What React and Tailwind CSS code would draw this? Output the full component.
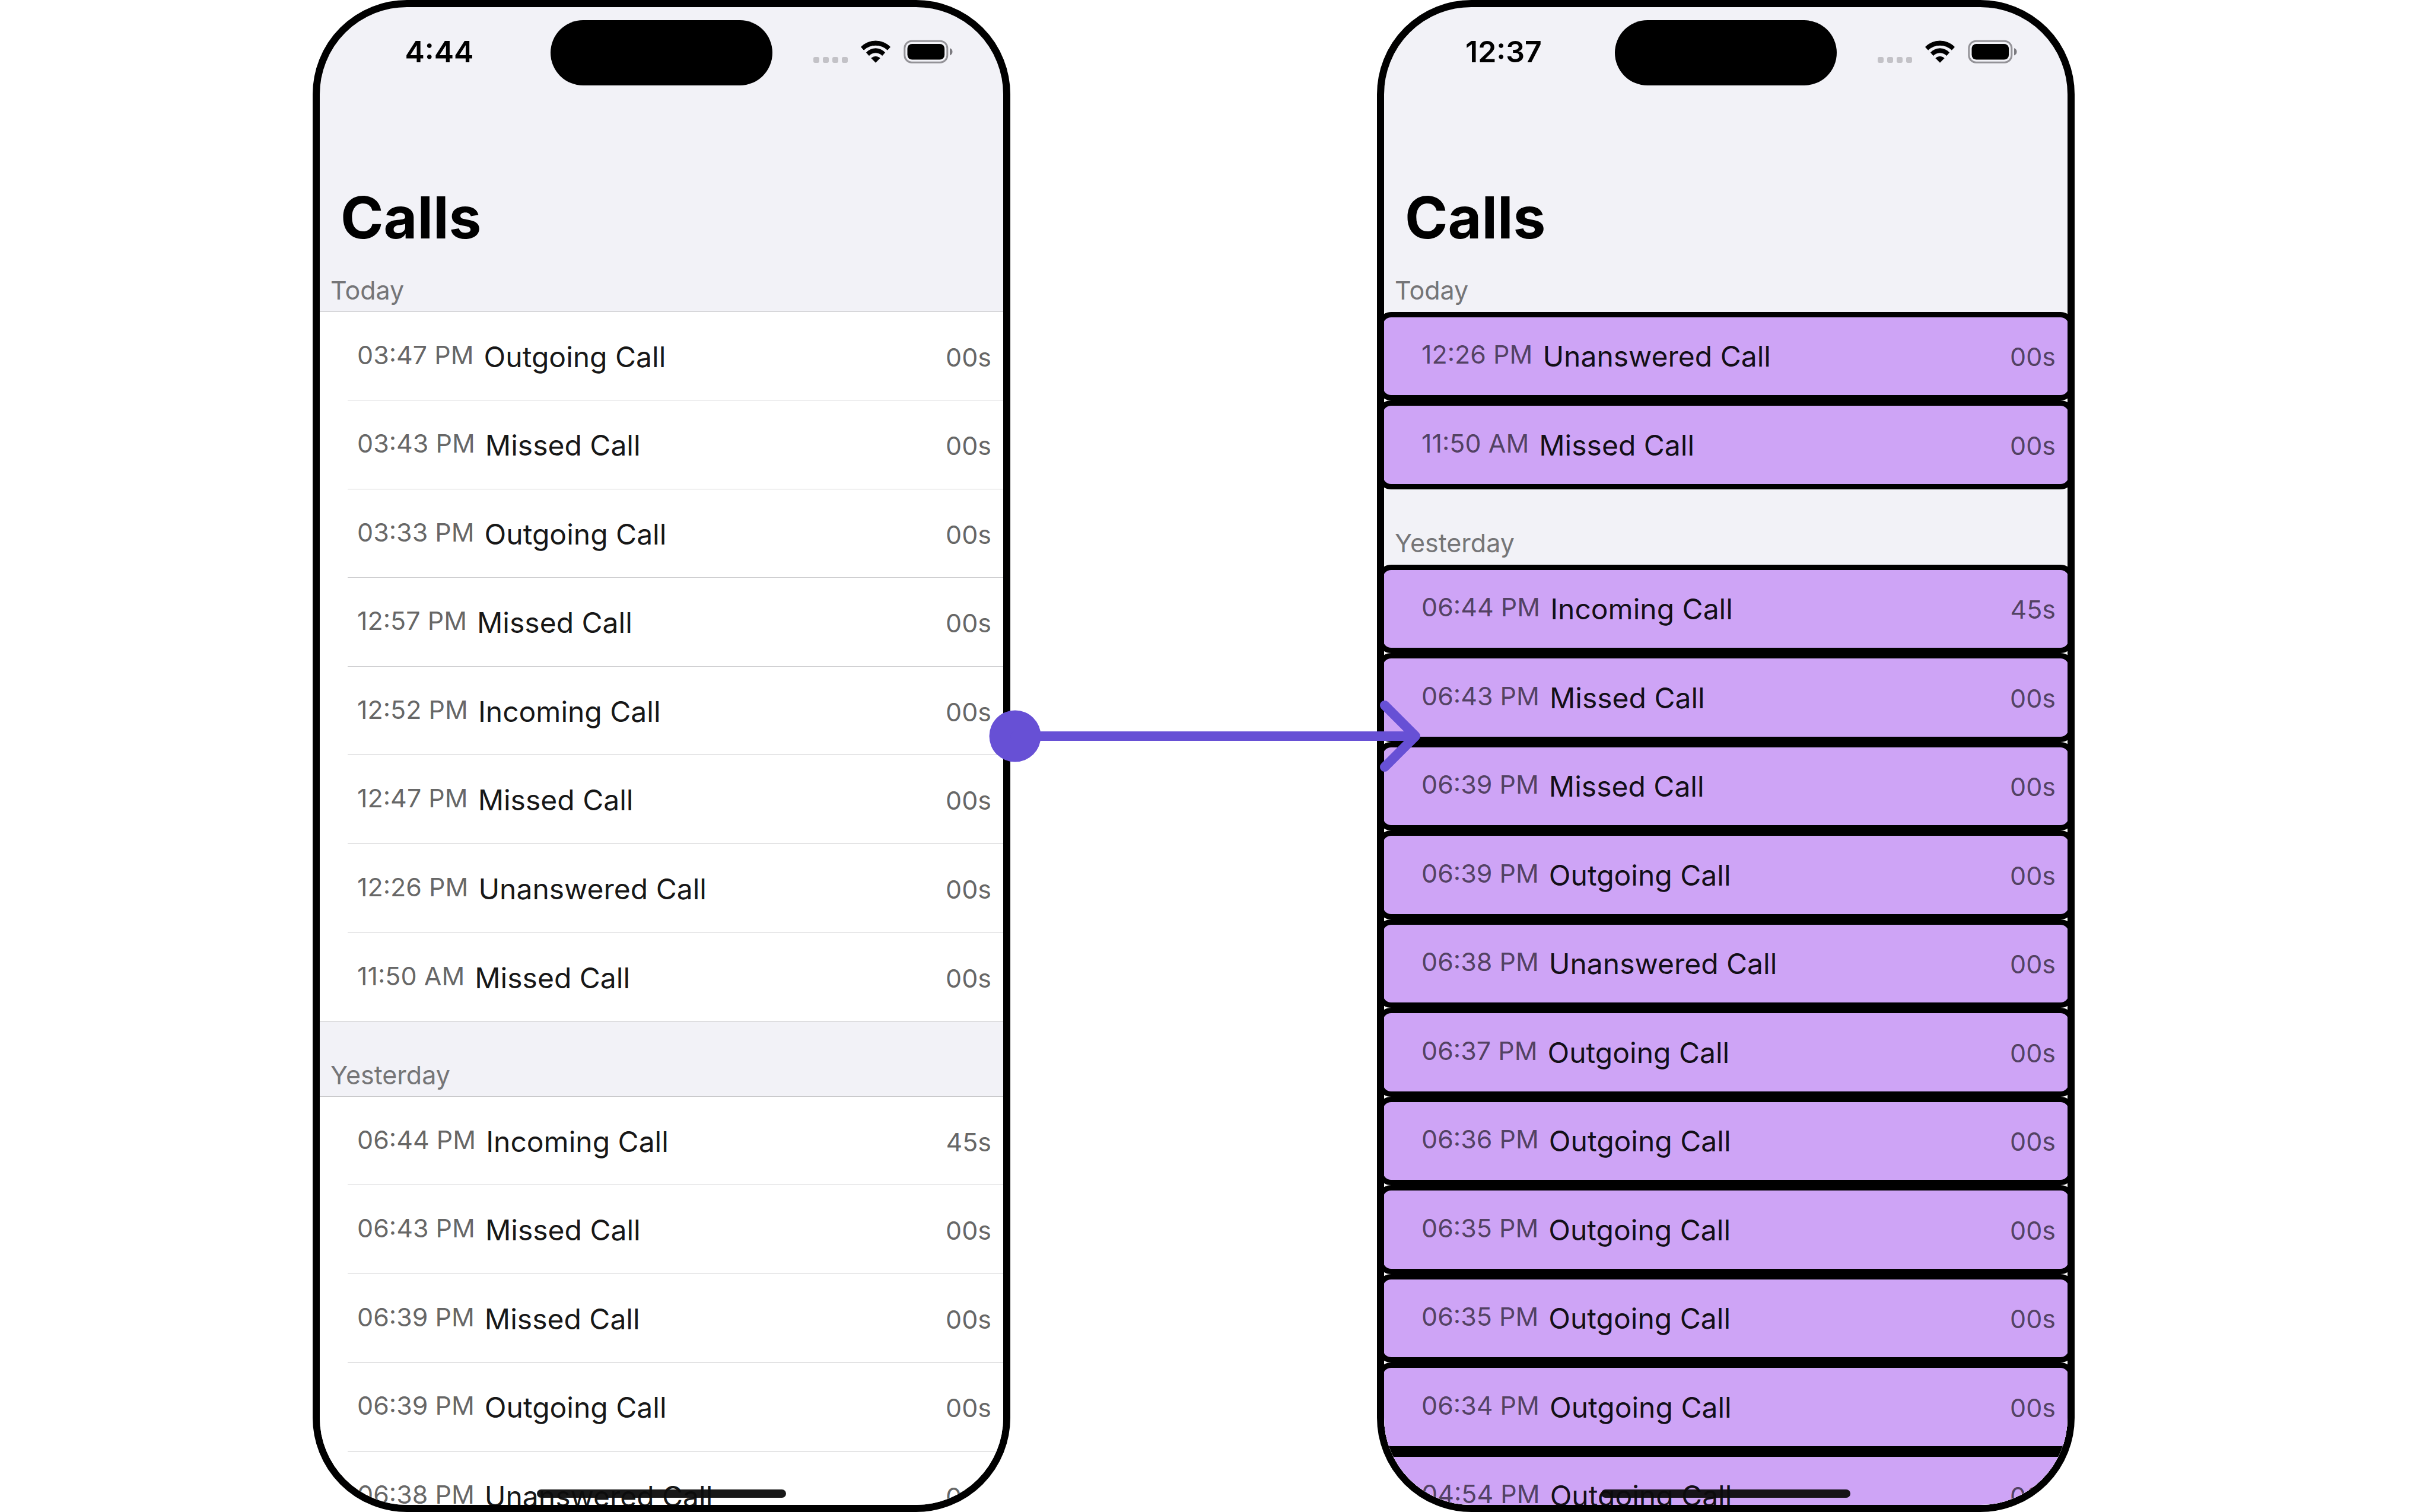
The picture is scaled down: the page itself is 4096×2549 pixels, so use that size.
const leftSections = [
  {
    label: "Today",
    calls: [
      ["03:47 PM", "Outgoing Call", "00s"],
      ["03:43 PM", "Missed Call", "00s"],
      ["03:33 PM", "Outgoing Call", "00s"],
      ["12:57 PM", "Missed Call", "00s"],
      ["12:52 PM", "Incoming Call", "00s"],
      ["12:47 PM", "Missed Call", "00s"],
      ["12:26 PM", "Unanswered Call", "00s"],
      ["11:50 AM", "Missed Call", "00s"],
    ],
  },
  {
    label: "Yesterday",
    calls: [
      ["06:44 PM", "Incoming Call", "45s"],
      ["06:43 PM", "Missed Call", "00s"],
      ["06:39 PM", "Missed Call", "00s"],
      ["06:39 PM", "Outgoing Call", "00s"],
      ["06:38 PM", "Unanswered Call", "00s"],
    ],
  },
];

const rightSections = [
  {
    label: "Today",
    calls: [
      ["12:26 PM", "Unanswered Call", "00s"],
      ["11:50 AM", "Missed Call", "00s"],
    ],
  },
  {
    label: "Yesterday",
    calls: [
      ["06:44 PM", "Incoming Call", "45s"],
      ["06:43 PM", "Missed Call", "00s"],
      ["06:39 PM", "Missed Call", "00s"],
      ["06:39 PM", "Outgoing Call", "00s"],
      ["06:38 PM", "Unanswered Call", "00s"],
      ["06:37 PM", "Outgoing Call", "00s"],
      ["06:36 PM", "Outgoing Call", "00s"],
      ["06:35 PM", "Outgoing Call", "00s"],
      ["06:35 PM", "Outgoing Call", "00s"],
      ["06:34 PM", "Outgoing Call", "00s"],
      ["04:54 PM", "Outgoing Call", "00s"],
    ],
  },
];

function StatusIcons() {
  return (
    <svg width="236" height="40" viewBox="1370 67 236 40" aria-hidden="true">
      <g fill="#c3c2c7">
        <rect x="1371" y="96" width="10" height="10" rx="3" />
        <rect x="1387" y="96" width="10" height="10" rx="3" />
        <rect x="1403" y="96" width="10" height="10" rx="3" />
        <rect x="1419" y="96" width="10" height="10" rx="3" />
      </g>
      <g fill="#000" stroke="#000" strokeWidth="1" strokeLinejoin="round">
        <path d="M1451.5 79A35.2 35.2 0 0 1 1500.5 79L1496 84.2A29 29 0 0 0 1456 84.2Z" />
        <path d="M1460.5 88.6A21.2 21.2 0 0 1 1491.5 88.6L1487.2 93.6A15.5 15.5 0 0 0 1464.8 93.6Z" />
        <path d="M1468.8 98A11.4 11.4 0 0 1 1483.2 98L1476 105.3Z" />
      </g>
      <rect x="1524.8" y="69.2" width="72" height="36" rx="12" fill="none" stroke="#949398" strokeWidth="3" />
      <rect x="1529.5" y="74" width="62.6" height="26.6" rx="8" fill="#000" />
      <path d="M1601 81Q1605.5 83 1605.5 87.2T1601 93.5Z" fill="#7c7b80" />
    </svg>
  );
}

function CallText({ call }) {
  const [time, title, duration] = call;
  return (
    <>
      <div className="flex items-start gap-[17px] whitespace-nowrap">
        <time className="text-[43px] leading-[54px] text-black/62">{time}</time>
        <span className="text-[48px] leading-[62px] text-black/92">{title}</span>
      </div>
      <span className="text-[43px] leading-[54px] text-black/62">{duration}</span>
    </>
  );
}

function PlainRow({ call }) {
  return (
    <li className="group flex min-h-[149px] pl-[47px] even:min-h-[150px]">
      <div className="flex flex-1 items-center justify-between border-b border-[#cbcbcd] pt-[3px] pr-5 pl-4 group-last:border-b-0">
        <CallText call={call} />
      </div>
    </li>
  );
}

function CardRow({ call }) {
  return (
    <li className="flex min-h-[149px] bg-white even:min-h-[150px]">
      <div className="-mx-[11px] flex flex-1 items-center justify-between rounded-[23px] border-[9px] border-black bg-[#cea4f6] pt-px pr-[22px] pl-[65px]">
        <CallText call={call} />
      </div>
    </li>
  );
}

function Section({ section, highlighted }) {
  const Row = highlighted ? CardRow : PlainRow;
  const lines = highlighted ? "border-transparent" : "border-[#c8c8ca]";
  return (
    <section className="group/section">
      <h2
        className={`border-b bg-[#f2f2f7] pb-[10px] pl-[18px] text-[43px] leading-[52px] font-normal text-[#757577] group-not-first-of-type/section:border-t group-not-first-of-type/section:pt-[63px] ${lines}`}
      >
        {section.label}
      </h2>
      <ul className="bg-white">
        {section.calls.map((call, i) => (
          <Row key={i} call={call} />
        ))}
      </ul>
    </section>
  );
}

function Phone({ clock, sections, highlighted }) {
  return (
    <div className="relative h-screen overflow-hidden rounded-[159px] border-[12px] border-black bg-[#f2f2f7]">
      <header className="grid grid-cols-[1fr_374px_1fr] items-center pt-[22px]">
        <span className="pb-1 pl-[14px] text-center text-[50px] leading-[60px] font-semibold">{clock}</span>
        <div className="h-[110px] rounded-full bg-black" />
        <div className="flex justify-end pr-[85px] pb-1">
          <StatusIcons />
        </div>
      </header>
      <h1 className="pt-[165px] pb-[38px] pl-[35px] text-[98px] leading-[116px] font-bold">Calls</h1>
      {sections.map((s) => (
        <Section key={s.label} section={s} highlighted={highlighted} />
      ))}
      <div className="absolute bottom-3 left-1/2 h-[14px] w-[420px] -translate-x-1/2 rounded-full bg-[#0c0c0c]/95" />
    </div>
  );
}

function Arrow() {
  return (
    <svg
      className="absolute top-[1173px] -left-[36px] z-10 w-[calc(100%+109px)]"
      viewBox="1667 1173 727 136"
      fill="none"
      stroke="#6750d5"
      strokeWidth="16"
      strokeLinecap="round"
      strokeLinejoin="round"
      aria-hidden="true"
    >
      <circle cx="1711" cy="1241" r="43.5" fill="#6750d5" stroke="none" />
      <path d="M1711 1241H2386M2334 1189L2386 1241L2334 1293" />
    </svg>
  );
}

export default function App() {
  return (
    <main className="grid h-screen grid-cols-[527fr_1176fr_618fr_1176fr_599fr] overflow-hidden bg-white font-['Inter',sans-serif] text-black">
      <div />
      <Phone clock="4:44" sections={leftSections} />
      <div className="relative">
        <Arrow />
      </div>
      <Phone clock="12:37" sections={rightSections} highlighted />
      <div />
    </main>
  );
}
